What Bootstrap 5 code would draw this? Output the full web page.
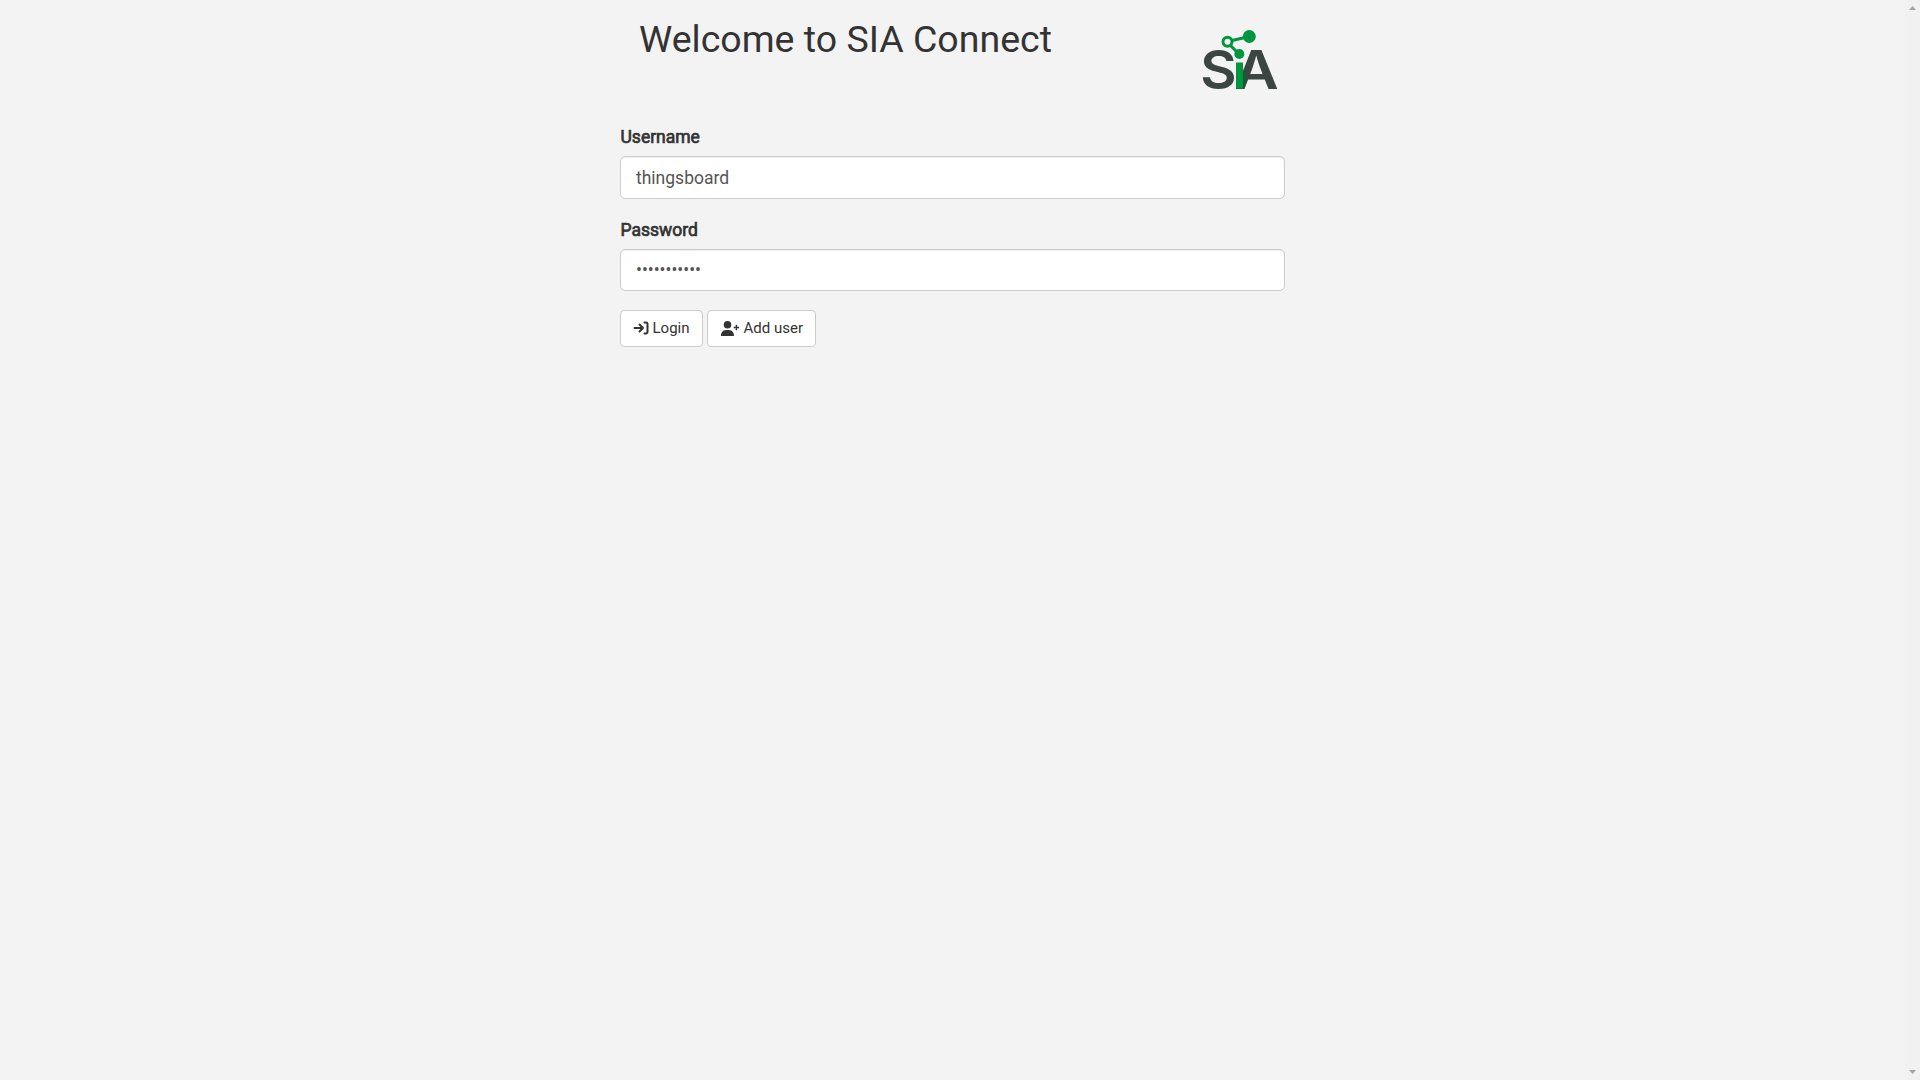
<!DOCTYPE html>
<html lang="en">
<head>
<meta charset="utf-8">
<title>SIA Connect</title>
<link rel="stylesheet" href="https://cdn.jsdelivr.net/npm/bootstrap@5.3.0/dist/css/bootstrap.min.css">
<style>
body{background:#f3f3f3;color:#333;font-family:Roboto,"Liberation Sans",sans-serif;overflow:hidden}
.login-panel{width:665px;margin-left:620px}
.page-title{font-size:37.5px;line-height:40px;font-weight:400;margin:19px 0 0 19px}
.sia-logo{width:100px;height:80px;margin:20px -5px 0 0}
.field-label{font-size:17.500px;line-height:27px;-webkit-text-stroke:.7px #333;margin:0 0 5px;padding-left:.5px;display:block}
.form-control.field{height:43px;border:1px solid #ccc;border-radius:5px;padding:0 15px;font-size:17.500px;color:#555;box-shadow:inset 0 1px 1px rgba(0,0,0,.075)}
.form-control.field-pass{height:42px}
.second-field{margin-top:18px}
.actions{margin-top:19px}
.btn.act{height:37px;border:1px solid #ccc;border-radius:4px;background:#fff;color:#333;font-size:15px;line-height:21px;padding:0 12.5px 0 12px}
.btn.act svg{margin-right:3.500px}
.scroll-track{width:15px;background:#f1f1f1}
</style>
</head>
<body>
<div class="d-flex vh-100 justify-content-between">
<main class="login-panel">
  <header class="d-flex justify-content-between align-items-start">
    <h1 class="page-title">Welcome to SIA Connect</h1>
    <svg class="sia-logo" viewBox="0 0 100 80" role="img" aria-label="SIA">
      <defs><linearGradient id="shade"><stop offset="0" stop-color="#06632f"/><stop offset="1" stop-color="#3b4643"/></linearGradient></defs>
      <g fill="#3b4643" font-family="Inter,sans-serif" font-weight="600" font-size="53">
        <text x="11.500" y="68.600" textLength="35" lengthAdjust="spacingAndGlyphs" transform="translate(-1.700 0) scale(1.04 1)">S</text>
        <text x="44.200" y="68.600" textLength="44.500" lengthAdjust="spacingAndGlyphs">A</text>
      </g>
      <path d="M53 52.500 59 54 53 68.600z" fill="url(#shade)"/>
      <g stroke="#009640" fill="none" stroke-width="3"><path d="M42 20.500 59.500 16.500M40 25 49 34"/><circle cx="37.500" cy="21.700" r="4.500"/></g>
      <g fill="#009640"><circle cx="59.300" cy="16.500" r="6.500"/><circle cx="49.300" cy="34" r="5"/><path d="M46 42.500h7V68.500h-7z"/></g>
    </svg>
  </header>
  <form>
    <div class="mt-4">
      <label class="field-label" for="user">Username</label>
      <input class="form-control field" id="user" type="text" value="thingsboard">
    </div>
    <div class="second-field">
      <label class="field-label" for="pass">Password</label>
      <input class="form-control field field-pass" id="pass" type="password" value="thingsboard">
    </div>
    <div class="actions d-flex gap-1">
      <button class="btn act d-flex align-items-center" type="button"><svg width="16" height="15" viewBox="0 0 16 15" fill="none" stroke="#333" stroke-width="2" stroke-linecap="round" stroke-linejoin="round"><path d="M1.500 7H10M6.500 3.500 10 7l-3.500 3.500M11.500 1.500H13a1.500 1.500 0 0 1 1.500 1.500v8a1.500 1.500 0 0 1-1.500 1.500h-1.500"/></svg>Login</button>
      <button class="btn act d-flex align-items-center" type="button"><svg width="20" height="15" viewBox="0 0 20 15" fill="#333"><circle cx="7.500" cy="3.800" r="3.800"/><path d="M1 15C.8 12 2.800 9 6 9h3C12.200 9 14.200 12 14 15zM13.700 5.800h2V3.800h1.400v2h2v1.400h-2v2h-1.400v-2h-2z"/></svg>Add user</button>
    </div>
  </form>
</main>
<div class="scroll-track d-flex flex-column justify-content-between align-items-center py-1" aria-hidden="true">
  <svg width="15" height="8" fill="#a3a3a3"><path d="M4 6h7L7.500 2z"/></svg>
  <svg width="15" height="8" fill="#a3a3a3"><path d="M4 2h7L7.500 6z"/></svg>
</div>
</div>
<script src="https://cdn.jsdelivr.net/npm/bootstrap@5.3.0/dist/js/bootstrap.bundle.min.js"></script>
</body>
</html>
